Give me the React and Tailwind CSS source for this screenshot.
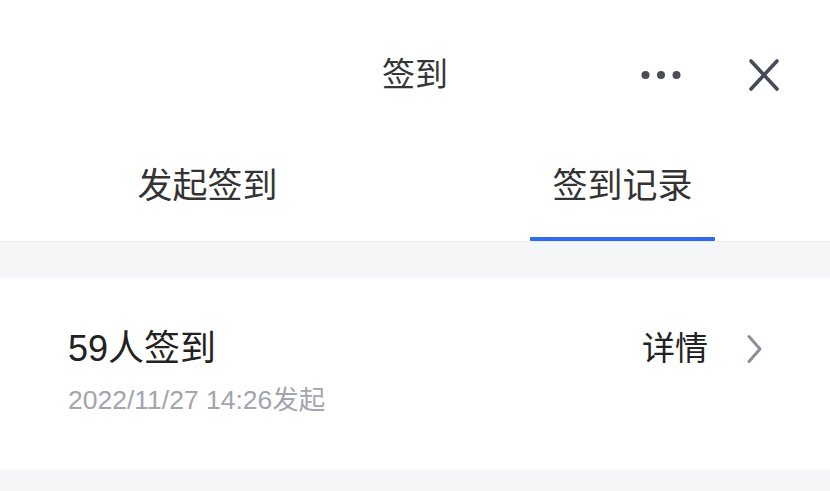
const font = { fontFamily: '"Liberation Sans", "Noto Sans CJK SC", sans-serif' };

function Dots() {
  return (
    <svg width="40" height="10" viewBox="0 0 40 10" className="text-[#4a4d58]">
      <circle cx="4.5" cy="5" r="4" fill="currentColor" />
      <circle cx="20" cy="5" r="4" fill="currentColor" />
      <circle cx="35.5" cy="5" r="4" fill="currentColor" />
    </svg>
  );
}

function Close() {
  return (
    <svg width="32" height="34" viewBox="0 0 32 34" className="text-[#474a57]">
      <path d="M3 3 L29 31 M29 3 L3 31" stroke="currentColor" strokeWidth="3.6" strokeLinecap="round" fill="none" />
    </svg>
  );
}

function Chevron() {
  return (
    <svg width="17" height="30" viewBox="0 0 17 30" className="text-[#8c8f98]">
      <path d="M3 2.5 L14 15 L3 27.5" stroke="currentColor" strokeWidth="3" strokeLinecap="round" strokeLinejoin="round" fill="none" />
    </svg>
  );
}

export default function App() {
  return (
    <div className="flex h-[491px] w-[830px] flex-col overflow-hidden bg-[#f5f6f8]" style={font}>
      <div className="bg-white">
        <header className="grid h-[150px] grid-cols-[1fr_auto_1fr] items-center">
          <div />
          <h1 className="text-[33px] leading-[40px] text-[#363636]">签到</h1>
          <div className="flex items-center justify-end gap-[67px] pr-[50px]">
            <Dots />
            <Close />
          </div>
        </header>

        <nav className="grid h-[92px] grid-cols-2 border-b border-[#ebebed]">
          <div className="flex flex-col items-center pt-[17px]">
            <span className="text-[35px] leading-[38px] text-[#333333]">发起签到</span>
          </div>
          <div className="flex flex-col items-center pt-[17px]">
            <span className="text-[35px] leading-[38px] text-[#333333]">签到记录</span>
            <div className="mt-auto h-[4px] w-[185px] rounded-[1px] bg-[#2f6bf0]" />
          </div>
        </nav>
      </div>

      <section className="mt-[36px] h-[192px] bg-white pl-[68px] pr-[67px] pt-[51px]">
        <div className="flex items-center justify-between">
          <span className="text-[36px] leading-[40px] text-[#222222]">59人签到</span>
          <div className="flex items-center gap-[38px]">
            <span className="text-[33px] leading-[40px] text-[#222222]">详情</span>
            <Chevron />
          </div>
        </div>
        <p className="mt-[16px] text-[26.5px] leading-[30px] text-[#a2a5ad]">2022/11/27 14:26发起</p>
      </section>
    </div>
  );
}
